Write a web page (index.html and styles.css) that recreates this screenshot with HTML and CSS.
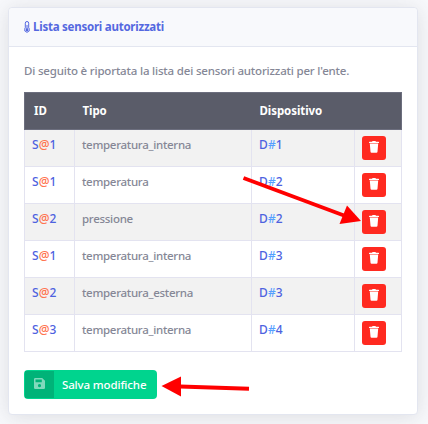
FILE: index.html
```html
<!DOCTYPE html>
<html lang="it">
<head>
<meta charset="utf-8">
<title>Lista sensori autorizzati</title>
<link rel="stylesheet" href="styles.css">
</head>
<body>
<svg class="defs" width="0" height="0" aria-hidden="true">
  <symbol id="trash" viewBox="0 0 10 12"><path d="M0 1.2Q0 .7.5.7H3Q3.2 0 3.8 0H6.2Q6.8 0 7 .7H9.5Q10 .7 10 1.2V2H0ZM.8 2.4H9.2L8.5 10.8Q8.4 11.7 7.5 11.7H2.5Q1.6 11.7 1.5 10.8Z"/></symbol>
</svg>
<main class="card">
  <header class="card-header">
    <svg class="thermo" viewBox="0 0 6 12"><path d="M1.3 6.8V2.2a1.7 1.7 0 0 1 3.4 0v4.6a2.5 2.5 0 1 1-3.4 0Z" fill="none" stroke="currentColor" stroke-width="1"/><path d="M3 4v4" stroke="currentColor"/><circle cx="3" cy="8.8" r="1.5" fill="currentColor"/></svg>
    <h1 class="title">Lista sensori autorizzati</h1>
  </header>
  <div class="card-body">
    <p class="intro">Di seguito è riportata la lista dei sensori autorizzati per l'ente.</p>
    <table class="sensors">
      <colgroup><col class="c-id"><col class="c-type"><col class="c-device"><col class="c-action"></colgroup>
      <thead><tr><th>ID</th><th>Tipo</th><th>Dispositivo</th><th></th></tr></thead>
      <tbody>
        <tr><td class="code">S<i class="at">@</i>1</td><td>temperatura_interna</td><td class="code">D<i class="hash">#</i>1</td><td><button class="delete" aria-label="Elimina"><svg><use href="#trash"/></svg></button></td></tr>
        <tr><td class="code">S<i class="at">@</i>1</td><td>temperatura</td><td class="code">D<i class="hash">#</i>2</td><td><button class="delete" aria-label="Elimina"><svg><use href="#trash"/></svg></button></td></tr>
        <tr><td class="code">S<i class="at">@</i>2</td><td>pressione</td><td class="code">D<i class="hash">#</i>2</td><td><button class="delete" aria-label="Elimina"><svg><use href="#trash"/></svg></button></td></tr>
        <tr><td class="code">S<i class="at">@</i>1</td><td>temperatura_interna</td><td class="code">D<i class="hash">#</i>3</td><td><button class="delete" aria-label="Elimina"><svg><use href="#trash"/></svg></button></td></tr>
        <tr><td class="code">S<i class="at">@</i>2</td><td>temperatura_esterna</td><td class="code">D<i class="hash">#</i>3</td><td><button class="delete" aria-label="Elimina"><svg><use href="#trash"/></svg></button></td></tr>
        <tr><td class="code">S<i class="at">@</i>3</td><td>temperatura_interna</td><td class="code">D<i class="hash">#</i>4</td><td><button class="delete" aria-label="Elimina"><svg><use href="#trash"/></svg></button></td></tr>
      </tbody>
    </table>
    <button class="save">
      <span class="save-icon"><svg viewBox="0 0 11 11"><path fill-rule="evenodd" d="M1.2 0H8.2L11 2.8V9.8Q11 11 9.8 11H1.2Q0 11 0 9.8V1.2Q0 0 1.2 0ZM1.5 1.5V4.2H7.8V1.5ZM5.5 6a1.6 1.6 0 1 0 .01 0Z"/></svg></span>
      <span class="save-label">Salva modifiche</span>
    </button>
  </div>
</main>
<svg class="arrows" viewBox="0 0 428 424" aria-hidden="true">
  <path d="M243.5 178 344 215.5" stroke="#f00" stroke-width="4"/>
  <path d="M347 205.5 361 221 339.5 224Z" fill="#f00"/>
  <path d="M249 388.7 180 386.5" stroke="#f00" stroke-width="4"/>
  <path d="M181 376.5V396.5L161.5 386Z" fill="#f00"/>
</svg>
</body>
</html>
```
FILE: styles.css
```css
* { box-sizing: border-box; }
body {
  margin: 0;
  height: 424px;
  padding: 7px 10px 9px 8px;
  overflow: hidden;
  background: #f8f9fc;
  color: #858796;
  font: 500 11.5px/18px "Noto Sans", "Open Sans", sans-serif;
}
.defs { position: absolute; }
.card {
  height: 408px;
  background: #fff;
  border: 1px solid #e3e6f0;
  border-radius: 4px;
  box-shadow: 0 2px 21px rgba(58, 59, 69, .15);
}
.card-header {
  display: flex;
  align-items: center;
  gap: 3px;
  height: 39px;
  padding: 0 15px;
  background: #f8f9fc;
  border-bottom: 1px solid #e3e6f0;
  border-radius: 4px 4px 0 0;
  color: #5468e0;
}
.thermo { width: 6px; height: 12px; }
.title { margin: 0; font-size: 11.5px; line-height: 18px; font-weight: 700; letter-spacing: -.24px; }
.card-body { padding: 15px; }
.intro { margin: 0 0 12px; white-space: nowrap; letter-spacing: -.18px; }
.sensors { width: 378px; table-layout: fixed; border-collapse: collapse; }
.c-id { width: 50px; }
.c-type { width: 177px; }
.c-device { width: 103px; }
.c-action { width: 47px; }
.sensors th {
  height: 37px;
  padding: 0 8px;
  background: #5a5c69;
  border: solid #6c6e7e;
  border-width: 1px 0;
  color: #fff;
  text-align: left;
  font-weight: 700;
  letter-spacing: -.08px;
}
.sensors th:first-child { padding-left: 9px; border-left-width: 1px; }
.sensors th:last-child { border-right-width: 1px; }
.sensors td {
  height: 37px;
  padding: 6px 7px 0;
  border: 1px solid #e3e3f0;
  vertical-align: top;
  letter-spacing: -.29px;
}
.sensors tbody tr:first-child td { border-top-color: #6c6e7e; }
.sensors tbody tr:nth-child(odd) { background: #f2f2f2; }
.sensors .code { color: #4e62df; letter-spacing: .1px; font-size: 12px; }
.at, .hash { font-style: normal; }
.at { color: #ff7550; }
.hash { color: #55a0ff; }
.delete {
  display: flex;
  justify-content: center;
  width: 24px;
  height: 24px;
  padding: 5px 0 0;
  border: 0;
  border-radius: 3px;
  background: #ff2a20;
}
.delete svg { width: 10px; height: 12px; fill: #fff; }
.save {
  display: flex;
  width: 133px;
  height: 29px;
  margin: 18px 0 0;
  padding: 1px;
  overflow: hidden;
  border: 0;
  border-radius: 4px;
  background: #00d48e;
  color: #fff;
  font: inherit;
}
.save-icon {
  display: flex;
  flex: 0 0 29px;
  height: 27px;
  justify-content: center;
  padding-top: 7px;
  background: #00b378;
}
.save-icon svg { width: 11px; height: 11px; fill: #80d9bc; }
.save-label { padding-left: 8px; line-height: 27px; white-space: nowrap; letter-spacing: -.14px; }
.arrows { position: absolute; left: 0; top: 0; width: 428px; height: 424px; pointer-events: none; }
```
